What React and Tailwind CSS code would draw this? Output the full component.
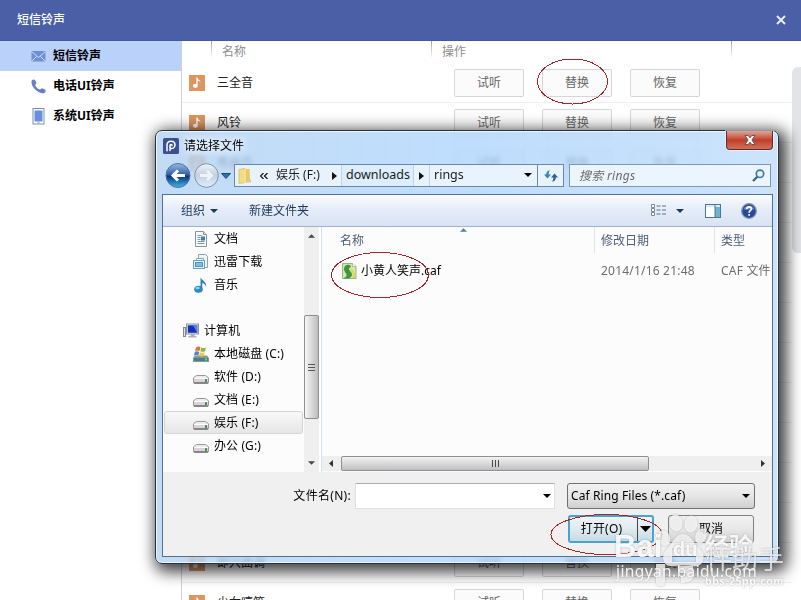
import React from 'react';

// Rows without a name sit behind the dialog and only keep their divider
const rings = ['三全音', '风铃', '布谷鸟', null, null, null, null, null, null, null, null, null, '即兴曲调', '少女嘻笑'];
const actions = ['试听', '替换', '恢复'];

const NoteIcon = () => (
  <svg className="w-4 h-4 shrink-0" viewBox="0 0 16 16">
    <rect width="16" height="16" fill="#dd965f" />
    <path d="M8 2.5v7.2" stroke="#fff" strokeWidth="1.4" />
    <path d="M8 2.5c.4 2 3.8 2 3.4 5.2C10.8 6 9.600 5.800 8 5.600z" fill="#fff" />
    <ellipse cx="6.400" cy="10.800" rx="2.500" ry="2.100" fill="#fff" />
  </svg>
);

const MailIcon = () => (
  <svg className="w-[15px] h-[15px]" viewBox="0 0 15 15">
    <rect x="0.500" y="2" width="14" height="10.500" fill="#6f8fd6" />
    <path d="M.5 2.500l7 6 7-6M.5 12.500l5-5M14.500 12.500l-5-5" fill="none" stroke="#dbe6fb" strokeWidth="0.900" />
  </svg>
);

const PhoneIcon = () => (
  <svg className="w-[15px] h-[15px]" viewBox="0 0 15 15">
    <path d="M.8 1.500C1.600.3 3.400.1 4.200 1.200l1.100 2.300c.4 1.100-1 1.700-1 2.500.2 1.700 2.800 4.300 4.600 4.500 1 0 1.600-1.500 2.700-1.100l2.400 1.200c1 .8.7 2.400-.4 3.100C9.400 16.500-1.500 8 .8 1.500z" fill="#6580c8" />
  </svg>
);

const TabletIcon = () => (
  <svg className="w-[15px] h-[17px]" viewBox="0 0 15 17">
    <rect x="2" y="0.500" width="11" height="15.500" fill="#fff" stroke="#7b8fae" />
    <rect x="3.500" y="2.500" width="8" height="11" fill="#6690dd" />
    <path d="M6.500 14.800h2" stroke="#7b8fae" />
  </svg>
);

const DocIcon = () => (
  <svg className="w-4 h-4" viewBox="0 0 16 16">
    <path d="M2.500.5h8l3 3v12h-11z" fill="#f8fbfd" stroke="#8a9499" />
    <path d="M10.500.5v3h3" fill="#d5dde2" stroke="#8a9499" />
    <path d="M4.500 4.500h4M4.500 6.500h3M4.500 8.500h3M4.500 10.500h7M4.500 12.500h7" stroke="#7b96ac" />
    <rect x="8" y="5.500" width="4" height="4" fill="#3f7fb5" />
  </svg>
);

const DownloadIcon = () => (
  <svg className="w-4 h-4" viewBox="0 0 16 16">
    <path d="M5.500.5h7l2 2v11h-9z" fill="#eef6fa" stroke="#86a6b8" />
    <path d="M3.500 4.500h7v6h-7z" fill="#fff" stroke="#86a6b8" />
    <rect x="0.500" y="6.500" width="11" height="8" fill="#eef6fb" stroke="#6c9cb9" />
    <rect x="2.500" y="8.500" width="7" height="4" fill="#7cc0e4" stroke="#4b94bd" />
  </svg>
);

const MusicIcon = () => (
  <svg className="w-4 h-4" viewBox="0 0 16 16">
    <path d="M7.500.2c.5 2.800 6.500 4 5.700 10-.6-2.500-2.200-3.700-4-4.200v6H7.500z" fill="#2c83ba" />
    <ellipse cx="5.500" cy="12.200" rx="4.300" ry="3.500" fill="#2b8ac6" />
    <ellipse cx="4.600" cy="11" rx="2.200" ry="1.300" fill="#8fd0f0" />
  </svg>
);

const ComputerIcon = () => (
  <svg className="w-4 h-4" viewBox="0 0 16 16">
    <rect x="0.500" y="4.500" width="2" height="9" fill="#dfe3e6" stroke="#83898e" />
    <rect x="3.500" y="1" width="12" height="10" fill="#e4e8ec" stroke="#8b959d" />
    <rect x="4.800" y="2.300" width="9.500" height="7.500" fill="#1632b4" />
    <path d="M9.800 2.300h4.500v7.500z" fill="#5c83e0" />
    <path d="M7.500 11h4v2h2v1.500h-8V13h2z" fill="#a9b2ba" />
  </svg>
);

const SystemDriveIcon = () => (
  <svg className="w-4 h-4" viewBox="0 0 16 16">
    <path d="M2 9.500h12l2 2.500v4H0v-4z" fill="#7d9a9e" />
    <path d="M1 12h14v3H1z" fill="#4b7f86" />
    <rect x="12" y="12.500" width="2" height="2" fill="#6edb62" />
    <path d="M3 1.500c2-1.400 3.500-1 4.500-.3L6.500 5c-1.500-.8-3-.8-4.500.2z" fill="#e0703c" />
    <path d="M8.300 1.500c1.500.8 3 .8 4.700 0l-1 3.800c-1.600.8-3.200.7-4.700-.1z" fill="#86b84a" />
    <path d="M1.800 6c1.500-1 3-.9 4.500-.1l-1 3.700c-1.500-.7-3-.7-4.500.2z" fill="#4f86c6" />
    <path d="M7 6.200c1.500.8 3 .8 4.800 0l-1 3.700c-1.700.8-3.300.7-4.800-.1z" fill="#efc643" />
  </svg>
);

const DriveIcon = () => (
  <svg className="w-4 h-4" viewBox="0 0 16 16">
    <path d="M3.500 6.500h9l3 2.300v4.700c0 .6-.4 1-1 1h-13c-.6 0-1-.4-1-1V8.800z" fill="#ececec" stroke="#8f8f8f" strokeWidth="0.900" />
    <path d="M1 9.500h14v3.500H1z" fill="#d6d6d6" />
    <path d="M1 9.500h14" stroke="#fff" />
    <path d="M1 13.800h14" stroke="#6d6d6d" strokeWidth="1.200" />
    <rect x="12" y="10.200" width="2" height="2.800" fill="#4a8d48" />
  </svg>
);

const FolderIcon = () => (
  <svg className="w-4 h-4" viewBox="0 0 16 16">
    <path d="M2 1.500l6-1v14l-6 1z" fill="#f3dc85" stroke="#d9b750" strokeWidth="0.700" />
    <path d="M8 1h4.500l.5 10 1 1.500v2H8z" fill="#ecc95f" />
    <path d="M8 1v13.500" stroke="#fbf2c2" />
    <path d="M11.500 11h2v3h-2z" fill="#b9cfd2" />
  </svg>
);

const CafIcon = () => (
  <svg className="w-[15px] h-4 shrink-0" viewBox="0 0 15 16">
    <path d="M.5.5h10l3.500 3v12H.5z" fill="#d3e9ac" stroke="#9aa58f" strokeWidth="0.900" />
    <path d="M10.500.5v3H14" fill="#fff" stroke="#9aa58f" strokeWidth="0.700" />
    <path d="M3 3c2-2 5.500-1.500 6 .5L7 5.500c-.5 2 3 3.500 3 6 0 2.500-2.500 4-5 4H1c3.500-1.500 4.500-3 3-5S1 5.500 3 3z" fill="#43953b" />
    <path d="M9 5c2.500 2 4.500 5 4 10h-3.500c2-3 1.500-5.500-1-8z" fill="#d3de56" />
  </svg>
);

const Caret = ({ className = '' }) => (
  <svg className={`w-2 h-1 shrink-0 ${className}`} viewBox="0 0 8 4">
    <path d="M0 0h8L4 4z" fill="currentColor" />
  </svg>
);

const RightCaret = () => (
  <svg className="w-[5px] h-2 shrink-0" viewBox="0 0 5 8">
    <path d="M0 0v8l5-4z" fill="#111" />
  </svg>
);

const menu = [
  { label: '短信铃声', icon: MailIcon, active: true },
  { label: '电话UI铃声', icon: PhoneIcon },
  { label: '系统UI铃声', icon: TabletIcon },
];

const tree = [
  { label: '文档', icon: DocIcon },
  { label: '迅雷下载', icon: DownloadIcon },
  { label: '音乐', icon: MusicIcon },
  null,
  { label: '计算机', icon: ComputerIcon, root: true },
  { label: '本地磁盘 (C:)', icon: SystemDriveIcon },
  { label: '软件 (D:)', icon: DriveIcon },
  { label: '文档 (E:)', icon: DriveIcon },
  { label: '娱乐 (F:)', icon: DriveIcon, active: true },
  { label: '办公 (G:)', icon: DriveIcon },
];

const ColumnLine = () => (
  <span className="absolute left-0 top-0 w-px h-4 bg-gradient-to-b from-gray-400 to-gray-100" />
);

const RingList = () => (
  <div className="flex-1 flex border-l border-[#ccd3de] overflow-hidden">
    <div className="w-[610px] shrink-0">
      {/* Column headings */}
      <div className="flex h-[22px] text-[#8d8d8d] leading-[21px]">
        <div className="w-[29px]" />
        <div className="w-[220px] relative pl-[11px]">
          <ColumnLine />
          名称
        </div>
        <div className="w-[300px] relative pl-[11px]">
          <ColumnLine />
          操作
        </div>
        <div className="relative">
          <ColumnLine />
        </div>
      </div>
      {rings.map((name, i) => (
        <div key={i} className="flex items-center h-10 pl-[7px] border-b border-[#efefef]">
          {name && (
            <>
              <NoteIcon />
              <span className="w-[237px] pl-3 text-[#222]">{name}</span>
              <div className="flex gap-[18px] pl-3">
                {actions.map((a) => (
                  <button key={a} className="w-[70px] h-7 rounded-xs border border-[#d6d6d6] bg-[#fbfbfb] text-[#666]">
                    {a}
                  </button>
                ))}
              </div>
            </>
          )}
        </div>
      ))}
    </div>
    <div className="flex-1 pt-[26px]">
      <div className="h-[186px] rounded-l-md bg-[#e3e4e8]" />
    </div>
  </div>
);

const TitleBar = () => (
  <div className="flex h-[29px] pl-[7px] pr-[5px] justify-between">
    <div className="flex items-center gap-[5px]">
      <svg className="w-4 h-4" viewBox="0 0 16 16">
        <rect width="16" height="16" rx="1.500" fill="#3a4f94" />
        <path d="M4 12.800V7c0-5 8-5 8 0 0 3.300-3.200 4.200-5 3M7 12.500V7.500c0-1.300 2-1.300 2 0" fill="none" stroke="#fff" strokeWidth="1.500" strokeLinecap="round" />
      </svg>
      <span className="text-black [text-shadow:0_0_6px_white,0_0_8px_white]">请选择文件</span>
    </div>
    <div className="w-[47px] h-[19px] flex items-center justify-center rounded-b-[4px] border border-t-0 border-[#5b2a2d] bg-gradient-to-b from-[#dfa598] via-[#c03d29] via-50% to-[#d1705a] shadow-[0_0_0_1px_rgba(255,255,255,0.5)]">
      <svg className="w-3 h-[10px]" viewBox="0 0 12 10">
        <path d="M1 .5h3.200L6 2.800 7.800.5H11L7.900 5 11 9.500H7.800L6 7.200 4.200 9.500H1L4.100 5z" fill="#fff" stroke="#6b4646" strokeWidth="0.900" />
      </svg>
    </div>
  </div>
);

const NavBar = () => (
  <div className="flex items-center h-[34px] pb-[3px] pl-[9px]">
    <svg className="w-[68px] h-[27px] shrink-0" viewBox="0 0 68 27">
      <defs>
        <linearGradient id="back" x2="0" y2="1">
          <stop offset="0" stopColor="#9dbbe2" />
          <stop offset="0.480" stopColor="#2c5ca8" />
          <stop offset="0.520" stopColor="#0d2f7c" />
          <stop offset="1" stopColor="#3cb9ee" />
        </linearGradient>
        <linearGradient id="fwd" x2="0" y2="1">
          <stop offset="0" stopColor="#eef3f8" />
          <stop offset="0.500" stopColor="#c3d0de" />
          <stop offset="1" stopColor="#e3eefa" />
        </linearGradient>
      </defs>
      <circle cx="13" cy="13.500" r="12" fill="url(#back)" stroke="#50729c" />
      <path d="M20 13.500H9M13 8.500l-5 5 5 5" fill="none" stroke="#fff" strokeWidth="3" />
      <circle cx="41.500" cy="13.500" r="11.800" fill="url(#fwd)" stroke="#7f93a9" />
      <path d="M35 13.500h10.500M42 9l4.500 4.500L42 18" fill="none" stroke="#eef3f8" strokeWidth="2.800" />
      <path d="M56.500 11.500h9l-4.500 5z" fill="#2b75a8" stroke="#1b4a75" />
    </svg>
    {/* Address */}
    <div className="flex items-center w-[330px] h-[23px] ml-px border border-[#6b87a5] bg-[#ecf5fe]/90 text-[#1b1b1b] shrink-0">
      <div className="w-[107px] h-full flex items-center pl-[2px] border-r border-[#bcd3e8]">
        <FolderIcon />
        <svg className="w-2 h-[6px] ml-[7px] mr-2" viewBox="0 0 8 6">
          <path d="M3.500 0l-3 3 3 3M7.500 0l-3 3 3 3" fill="none" stroke="#111" strokeWidth="1.200" />
        </svg>
        <span className="flex-1 whitespace-nowrap -mt-px">娱乐 (F:)</span>
        <span className="pr-1"><RightCaret /></span>
      </div>
      <div className="w-[72px] h-full flex items-center pl-1 pb-px border-r border-[#bcd3e8] bg-[#dceefb] text-[12.5px]">downloads</div>
      <div className="w-4 h-full flex items-center justify-center border-r border-[#bcd3e8]"><RightCaret /></div>
      <div className="flex-1 flex items-center justify-between pl-1 pr-[5px] pb-px text-[12.5px]">
        rings
        <Caret className="text-black" />
      </div>
      <div className="w-[26px] h-full flex items-center justify-center border-l border-[#6b87a5]">
        <svg className="w-[14px] h-3" viewBox="0 0 14 12">
          <path d="M6 .3C3.200.5 2.200 2.500 2.200 4.500H0l3.500 4 3.500-4H4.700C4.700 3 5 1.300 6 .3z" fill="#3a83b8" />
          <path d="M8 11.700c2.800-.2 3.800-2.200 3.800-4.200H14l-3.500-4-3.500 4h2.300c0 1.500-.3 3.200-1.300 4.200z" fill="#2c6499" />
        </svg>
      </div>
    </div>
    {/* Search */}
    <div className="flex items-center justify-between w-[202px] h-[23px] ml-[5px] pl-[9px] pr-[5px] border border-[#7c98b5] bg-[#f0f7fe]/90 text-[#6b6b6b] italic shrink-0">
      <span className="tracking-[0.3px]">搜索 rings</span>
      <svg className="w-[13px] h-[13px]" viewBox="0 0 13 13">
        <circle cx="8" cy="4.800" r="3.700" fill="#e2f1fb" stroke="#3c7bab" strokeWidth="1.700" />
        <path d="M5.300 7.700L1 12" stroke="#335f8f" strokeWidth="2.200" />
      </svg>
    </div>
  </div>
);

const Toolbar = () => (
  <div className="flex items-center h-8 pl-[18px] pr-[15px] border-b border-[#9fb4cc] bg-gradient-to-b from-[#f9fbfe] via-[#e4ecf8] via-50% to-[#d8e3f3] text-[#1e395b]">
    <span>组织</span>
    <Caret className="ml-[5px]" />
    <span className="ml-[31px]">新建文件夹</span>
    <svg className="w-4 h-[13px] ml-auto" viewBox="0 0 16 13">
      <path d="M.5.500h3v3h-3zM.5 4.500h3v3h-3zM.5 8.500h3v3h-3z" fill="#fff" stroke="#7d8794" />
      <path d="M5.500 2h4M11 2h4M5.500 6h4M11 6h4M5.500 10h4M11 10h4" stroke="#5d7188" />
    </svg>
    <Caret className="ml-[9px]" />
    <svg className="w-4 h-[14px] ml-[21px]" viewBox="0 0 16 14">
      <rect x="0.500" y="0.500" width="15" height="13" fill="#fff" stroke="#4a7894" />
      <path d="M1 2h14" stroke="#b6d3e0" />
      <rect x="10" y="3" width="5" height="10" fill="#6fb3cf" />
      <path d="M10 1v12" stroke="#4a7894" />
    </svg>
    <svg className="w-4 h-4 ml-5" viewBox="0 0 16 16">
      <circle cx="8" cy="8" r="7.300" fill="#27499c" stroke="#8290a8" strokeWidth="1.300" />
      <path d="M2.500 6.500C4 1.500 12 1.500 13.500 6.500z" fill="#6a8bcf" />
      <path d="M5.700 6.300c0-3.400 5-3.100 4.700-.3-.2 1.700-2.300 1.600-2.300 3.700M8.100 11v1.700" fill="none" stroke="#fff" strokeWidth="1.700" />
    </svg>
  </div>
);

const FolderTree = () => (
  <div className="w-[141px] bg-[#fcfcfc] text-black">
    {tree.map((item, i) =>
      item ? (
        <div
          key={item.label}
          className={`flex items-center gap-[5px] h-[23px] ml-px mr-px rounded-[3px] border ${item.root ? 'pl-[18px]' : 'pl-7'} ${item.active ? 'border-[#d5d5d5] bg-gradient-to-b from-[#f9f9f9] to-[#e6e6e6]' : 'border-transparent'}`}
        >
          <item.icon />
          <span className="whitespace-nowrap tracking-[0.1px] leading-4">{item.label}</span>
        </div>
      ) : (
        <div key={i} className="h-[23px]" />
      )
    )}
  </div>
);

const VerticalScroll = () => (
  <div className="w-[15px] flex flex-col items-center bg-[#efefef] text-[#444]">
    <div className="h-[88px] pt-[7px]">
      <Caret className="rotate-180 w-[7px]" />
    </div>
    <div className="w-[15px] h-[104px] flex flex-col items-center justify-center gap-[2px] rounded-xs border border-[#8f8f8f] bg-gradient-to-r from-[#f6f6f6] to-[#bdbdbf]">
      <span className="w-[7px] h-px bg-[#555]" />
      <span className="w-[7px] h-px bg-[#555]" />
      <span className="w-[7px] h-px bg-[#555]" />
    </div>
    <Caret className="mt-auto mb-[7px] w-[7px]" />
  </div>
);

const FileList = () => (
  <div className="w-[450px] flex flex-col bg-[#fcfcfc] overflow-hidden">
    <div className="flex h-[26px] leading-[28px] text-[#4c607a]">
      <div className="relative w-[272px] pl-[18px]">
        <span className="absolute left-[138px] top-px flex text-[#4b8399]"><Caret className="rotate-180 w-[7px]" /></span>
        名称
      </div>
      <div className="w-[120px] pl-[6px] border-l border-[#dfe6ee]">修改日期</div>
      <div className="pl-[6px] border-l border-[#dfe6ee]">类型</div>
    </div>
    <div className="flex items-center h-9 text-[#6d6d6d] whitespace-nowrap">
      <div className="flex items-center gap-1 w-[279px] pl-5 text-black">
        <CafIcon />
        小黄人笑声.caf
      </div>
      <div className="w-[120px] shrink-0 tracking-[0.2px]">2014/1/16 21:48</div>
      <div className="shrink-0 tracking-[0.2px]">CAF 文件</div>
    </div>
    <div className="flex items-center h-[15px] mt-auto mb-px px-[7px] bg-[#efefef]">
      <svg className="w-1 h-[7px]" viewBox="0 0 4 7"><path d="M4 0v7L0 3.500z" fill="#333" /></svg>
      <div className="w-[308px] h-[15px] ml-2 flex items-center justify-center gap-[2px] rounded-xs border border-[#8f8f8f] bg-gradient-to-b from-[#f3f3f3] to-[#bfbfc1]">
        <span className="w-px h-[7px] bg-[#444]" />
        <span className="w-px h-[7px] bg-[#444]" />
        <span className="w-px h-[7px] bg-[#444]" />
      </div>
      <svg className="w-1 h-[7px] ml-auto" viewBox="0 0 4 7"><path d="M0 0v7l4-3.500z" fill="#333" /></svg>
    </div>
  </div>
);

const DialogFooter = () => (
  <div className="flex flex-col gap-[6px] h-[84px] pt-[11px] bg-[#f0f0f0] text-black">
    <div className="flex items-center h-[26px]">
      <span className="w-[188px] text-right tracking-[0.3px]">文件名(N):</span>
      <div className="w-[200px] h-full ml-[4px] pr-[3px] flex items-center justify-end border border-[#e0e0e2] border-t-[#abadb3] bg-white">
        <Caret />
      </div>
      <div className="w-[188px] h-full ml-3 pl-[3px] pr-1 flex items-center justify-between rounded-[3px] border border-[#707070] bg-gradient-to-b from-[#f2f2f2] via-[#e6e6e6] via-50% to-[#cfcfcf]">
        <span className="tracking-[0.1px]">Caf Ring Files (*.caf)</span>
        <Caret />
      </div>
    </div>
    <div className="flex h-[28px] pl-[405px] gap-[14px]">
      <div className="w-[86px] flex items-center rounded-[3px] border-2 border-[#4aa3cc] bg-gradient-to-b from-[#eef4f7] via-[#e0eaef] via-50% to-[#c5dbe6]">
        <span className="flex-1 text-center pr-1 tracking-[0.2px]">打开(O)</span>
        <span className="h-full w-[15px] flex items-center justify-center border-l border-[#444]">
          <svg className="w-[11px] h-[6px]" viewBox="0 0 11 6"><path d="M0 0h11L5.500 6z" /></svg>
        </span>
      </div>
      <div className="w-[86px] flex items-center justify-center rounded-[3px] border border-[#808080] bg-gradient-to-b from-[#f2f2f2] via-[#e8e8e8] via-50% to-[#d3d3d3]">
        取消
      </div>
    </div>
  </div>
);

const FileDialog = () => (
  <div className="absolute left-[155px] top-[130px] w-[624px] h-[434px] rounded-[7px] border border-[#24313f] bg-gradient-to-r from-[#b4d3f2]/80 via-[#a9d2fd]/75 to-[#bfdcfa]/80 backdrop-blur-[2px] shadow-[4px_4px_15px_4px_rgba(0,0,0,0.75),inset_0_0_0_1px_rgba(255,255,255,0.7)]">
    <TitleBar />
    <NavBar />
    <div className="w-[611px] h-[363px] ml-[6px] border border-[#52708f]">
      <Toolbar />
      <div className="flex h-[245px]">
        <FolderTree />
        <VerticalScroll />
        <div className="w-[3px] bg-white border-r border-[#d2e0ef]" />
        <FileList />
      </div>
      <DialogFooter />
    </div>
  </div>
);

// Red pen circles over the steps
const Marks = () => (
  <svg className="absolute left-0 top-0 w-[801px] h-[600px] pointer-events-none" viewBox="0 0 801 600" fill="none" stroke="#a3262a" shapeRendering="crispEdges">
    <ellipse cx="572.500" cy="81.500" rx="35" ry="22.500" />
    <ellipse cx="380" cy="275" rx="48.500" ry="22.500" />
    <ellipse cx="606.500" cy="534.500" rx="55.500" ry="20" />
  </svg>
);

const Watermark = () => (
  <div className="absolute left-[614px] top-[512px] w-[187px] h-[88px] text-white/90 pointer-events-none whitespace-nowrap [text-shadow:0_0_2px_rgba(120,120,120,0.6)]">
    <svg className="absolute left-[38px] top-0 w-[66px] h-[76px] drop-shadow-[0_0_1px_rgba(120,120,120,0.6)]" viewBox="0 0 66 76" fill="#fff" fillOpacity="0.750">
      <ellipse cx="24" cy="11" rx="6.500" ry="8.500" transform="rotate(-8 24 11)" />
      <ellipse cx="39" cy="12" rx="6.500" ry="8.500" transform="rotate(10 39 12)" />
      <ellipse cx="12" cy="26" rx="6" ry="8" transform="rotate(-20 12 26)" />
      <ellipse cx="49" cy="24" rx="5.500" ry="8" transform="rotate(22 49 24)" />
      <path fillRule="evenodd" d="M31 22c8 0 10 9 16 14 8 7 5 20-6 18-6-1-13-1-19 0-11 2-14-10-7-17 6-6 8-15 16-15zM20 36v14h24V36z" />
      <path d="M26 54h15v10c0 5-5 7-12 7v-6c4 0 5-1 5-4h-8zM4 52h9v18c0 6-9 6-9 0z" />
    </svg>
    <span className="absolute left-0 top-[18px] text-[31px] leading-[34px] font-bold font-['Liberation_Sans']">Bai</span>
    <span className="absolute left-[59px] top-[25px] text-[20px] leading-[24px] font-bold font-['Liberation_Sans']">du</span>
    <span className="absolute left-[91px] top-[20px] text-[24px] leading-[28px] font-bold">经验</span>
    <span className="absolute left-[92px] top-[34px] text-[26px] leading-[26px] text-white/70">怦助手</span>
    <span className="absolute left-[2px] top-[50px] text-[15.5px] leading-[18px] tracking-[0.4px] font-['Noto_Sans']">jingyan.baidu.com</span>
    <span className="absolute left-[91px] top-[62px] text-[10.5px] leading-[14px] tracking-[0.6px] font-bold">bbs.25pp.com</span>
  </div>
);

const App = () => {
  return (
    <div className="relative w-[801px] h-[600px] flex flex-col overflow-hidden bg-white text-xs font-['Noto_Sans','Noto_Sans_CJK_SC',sans-serif]">
      <div className="flex items-center justify-between h-[41px] shrink-0 pl-[17px] pr-[15px] bg-[#4a5fa5] border-b border-[#4458a0] text-white">
        <span className="font-medium">短信铃声</span>
        <svg className="w-[10px] h-[10px]" viewBox="0 0 10 10">
          <path d="M1 1l8 8M9 1L1 9" stroke="#e8ecf7" strokeWidth="2" />
        </svg>
      </div>
      <div className="flex flex-1 min-h-0">
        <div className="w-[181px] shrink-0">
          {menu.map((item) => (
            <div
              key={item.label}
              className={`flex items-center gap-[7px] h-[30px] pl-[31px] font-bold text-black ${item.active ? 'bg-[#bad2f9]' : ''}`}
            >
              <item.icon />
              {item.label}
            </div>
          ))}
        </div>
        <RingList />
      </div>
      <FileDialog />
      <Marks />
      <Watermark />
    </div>
  );
};

export default App;
